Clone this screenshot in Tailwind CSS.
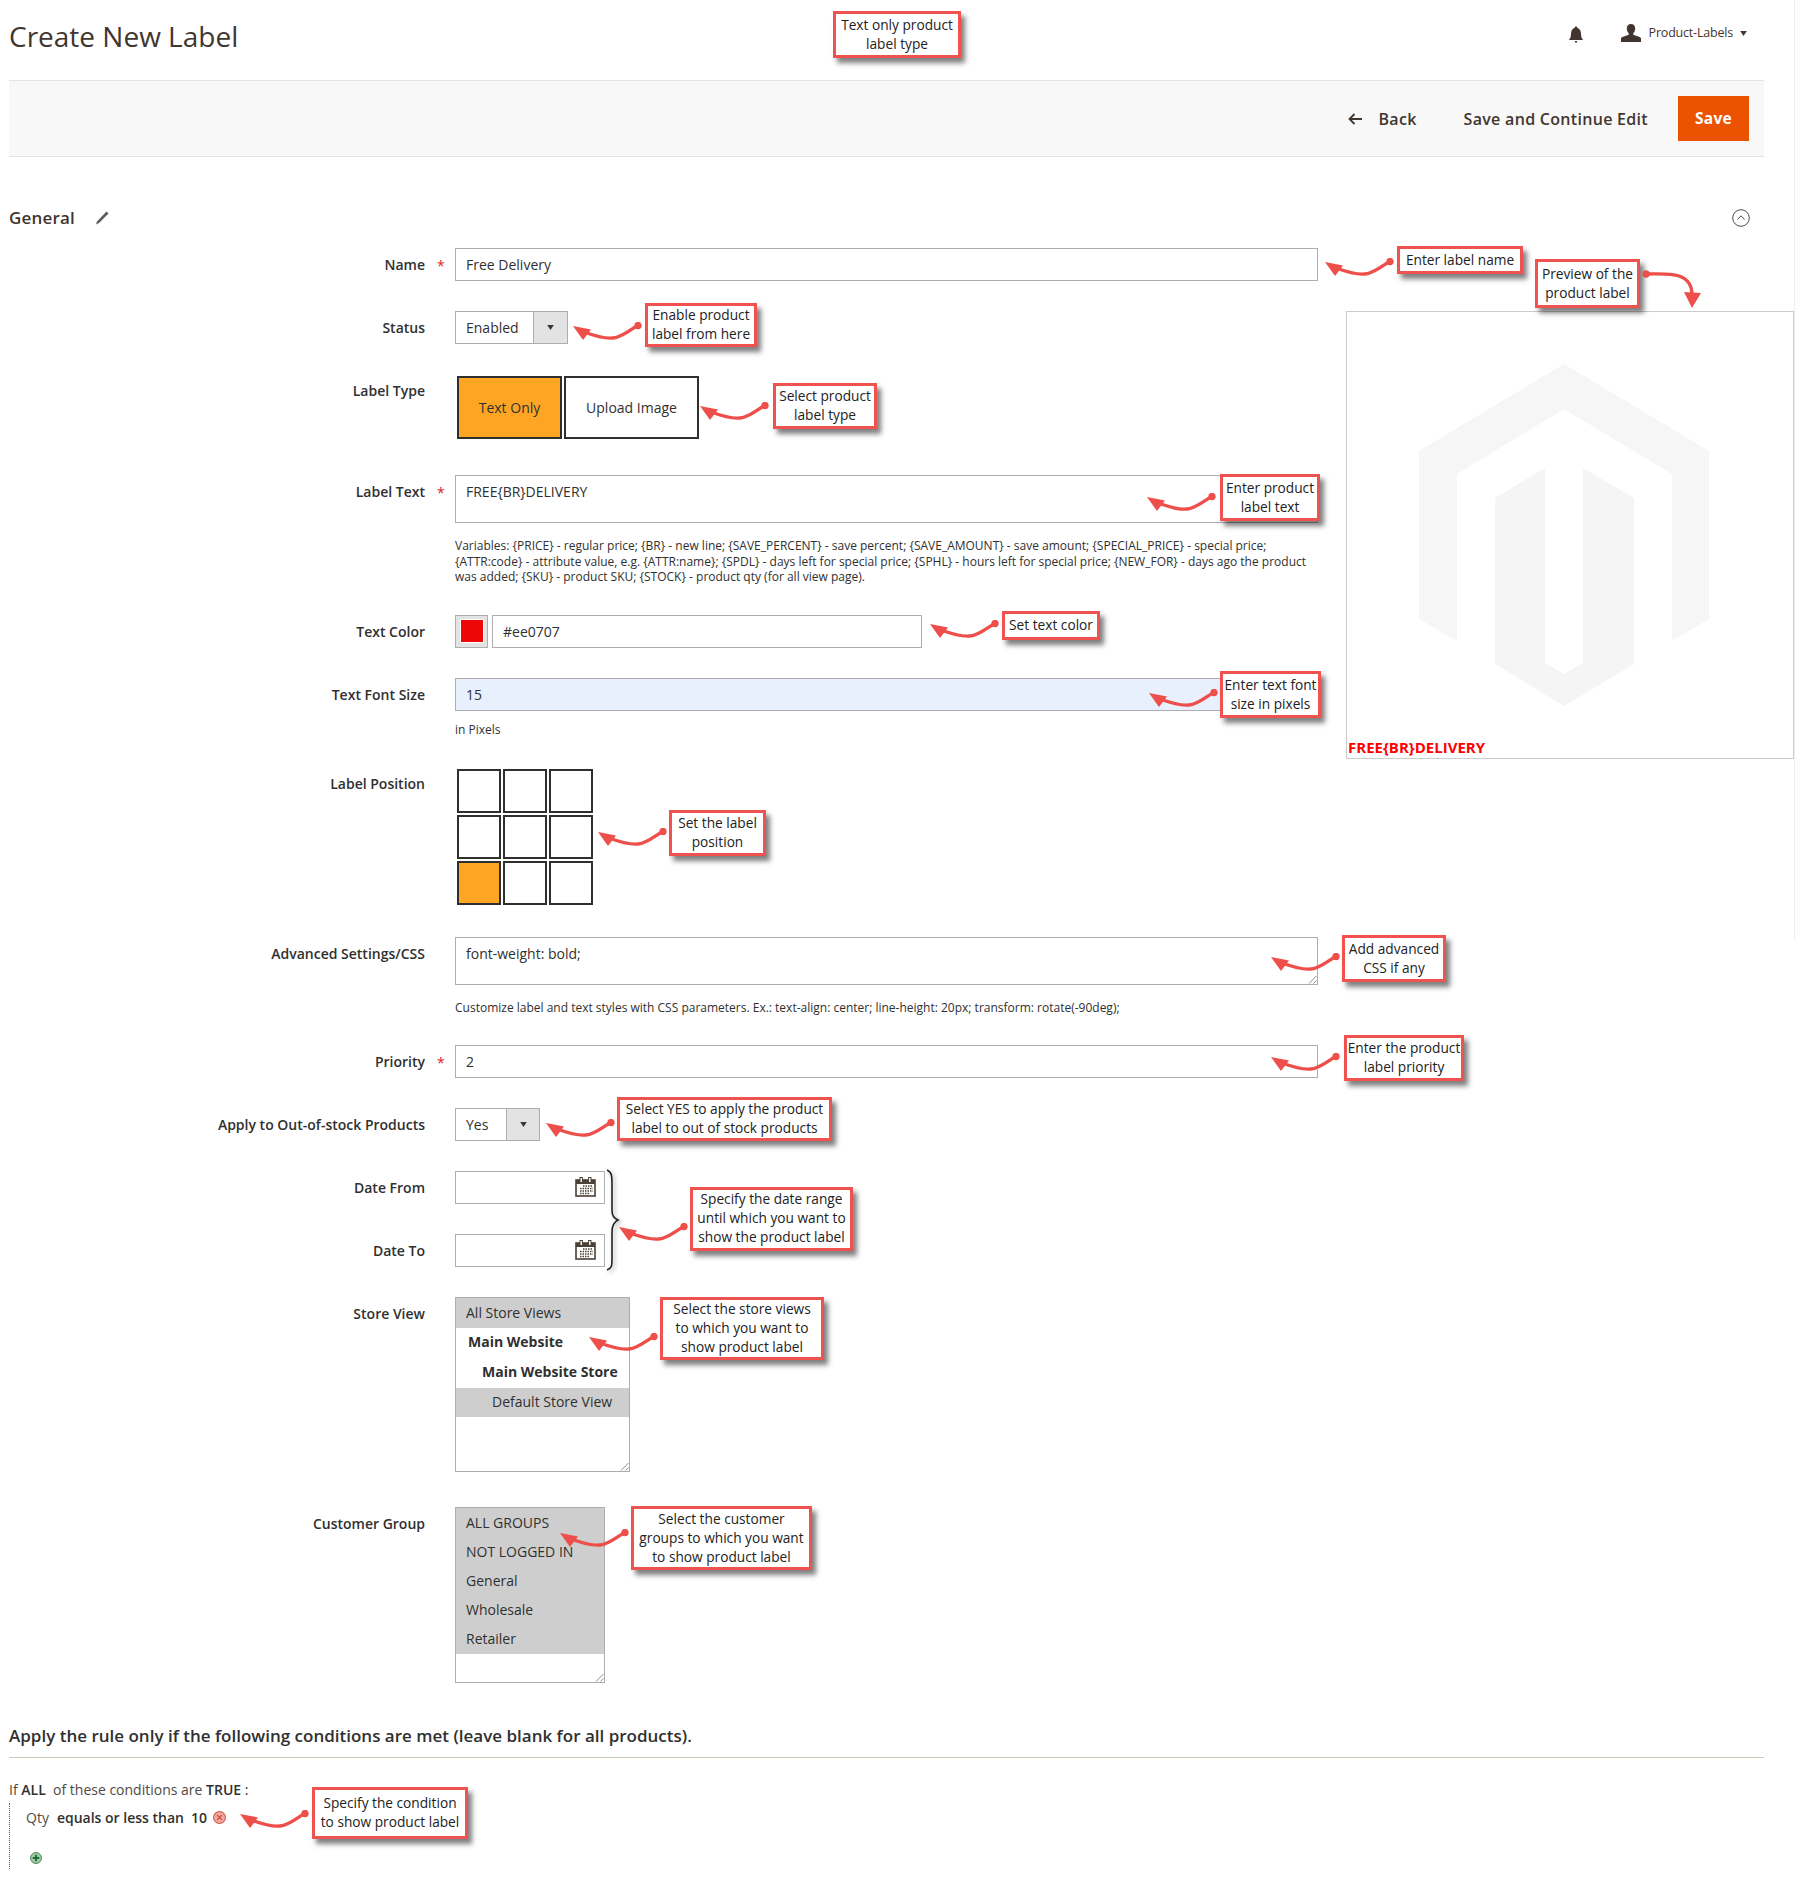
<!DOCTYPE html>
<html lang="en">
<head>
<meta charset="utf-8">
<title>Create New Label</title>
<script src="https://cdn.jsdelivr.net/npm/@tailwindcss/browser@4"></script>
</head>
<body class="bg-white">
<svg class="hidden" width="0" height="0">
  <symbol id="arr" viewBox="0 -2 70 20">
    <polygon points="0,2 18,5.500 10,16" fill="#ee4f4b"/>
    <path d="M11,8 C22,12 32,15 40,14 C50,13 56,6 65,1.500" fill="none" stroke="#ee4f4b" stroke-width="3.400" stroke-linecap="round"/>
    <circle cx="65" cy="1.500" r="3.700" fill="#ee4f4b"/>
  </symbol>
  <symbol id="cal" viewBox="0 0 21 20">
    <rect x="1" y="3" width="19" height="16" fill="#fff" stroke="#4a4035" stroke-width="1.600"/>
    <rect x="1" y="3" width="19" height="4" fill="#4a4035"/>
    <rect x="5" y="0.500" width="2.400" height="5" fill="#fff" stroke="#4a4035" stroke-width="1"/>
    <rect x="13.600" y="0.500" width="2.400" height="5" fill="#fff" stroke="#4a4035" stroke-width="1"/>
    <path d="M8 9h10M5 11.500h13M5 14h13M5 16.500h9" stroke="#4a4035" stroke-width="1.500" stroke-dasharray="1.500 1"/>
  </symbol>
  <symbol id="grip" viewBox="0 0 10 10">
    <path d="M9.500 2 L2 9.500 M9.500 6.500 L6.500 9.500" stroke="#8a8a8a" stroke-width="1"/>
  </symbol>
  <symbol id="tri" viewBox="0 0 8 6">
    <polygon points="0,0 8,0 4,6" fill="#41362f"/>
  </symbol>
</svg>

<div class="relative w-[1795px] h-[1883px] overflow-hidden text-[14px] text-[#303030] [font-family:'Open_Sans',sans-serif]">
  <!-- page chrome -->
  <header class="ml-[9px] w-[1755px] h-[80px] pb-[8px] flex items-center">
    <h1 class="text-[28px] leading-[36px] font-normal text-[#41362f]">Create New Label</h1>
    <div class="ml-auto mr-[17px] flex items-center mb-[2px]">
      <svg class="w-[16px] h-[18px]" viewBox="0 0 16 18"><path d="M8 0.500c1 0 1.400.7 1.400 1.400C12 2.600 13 5 13 8c0 3 .8 4.600 2.200 6H.8C2.200 12.600 3 11 3 8c0-3 1-5.400 3.600-6.100C6.600 1.200 7 .5 8 .5zM6.700 15h2.600L8 17.500z" fill="#41362f"/></svg>
      <svg class="ml-[37px] w-[20px] h-[18px] mb-[4px]" viewBox="0 0 20 18"><path d="M10 0c2.600 0 4.200 1.800 4.200 4.500 0 2-.8 3.600-1.900 4.700v1.500c2.500.8 6.300 2 7.700 3.300V18H0v-4c1.400-1.300 5.200-2.500 7.700-3.300V9.200C6.600 8.100 5.800 6.500 5.800 4.500 5.800 1.800 7.400 0 10 0z" fill="#41362f"/></svg>
      <span class="ml-[8px] text-[12.500px] tracking-[-0.2px] leading-[18px] mb-[4px] text-[#41362f]">Product-Labels</span>
      <svg class="ml-[7px] w-[7px] h-[5px] mb-[3px]"><use href="#tri"/></svg>
    </div>
  </header>

  <div class="ml-[9px] w-[1755px] h-[77px] bg-[#f8f8f8] border-y border-[#e3e3e3] flex items-center justify-end pr-[15px] text-[16px] tracking-[0.3px] font-semibold text-[#41362f]">
    <svg class="w-[14px] h-[12px] mr-[16px]" viewBox="0 0 14 12"><path d="M14 6H2M6.500 1 1.500 6l5 5" fill="none" stroke="#41362f" stroke-width="1.800"/></svg>
    <span>Back</span>
    <span class="ml-[47px]">Save and Continue Edit</span>
    <span class="ml-[30px] w-[71px] h-[45px] bg-[#eb5202] text-white flex items-center justify-center font-bold text-[15.500px]">Save</span>
  </div>

  <div class="ml-[9px] w-[1741px] mt-[51px] h-[20px] flex items-center">
    <h2 class="w-[66px] text-[17px] leading-[20px] font-semibold tracking-[0.2px] text-[#41362f]">General</h2>
    <svg class="ml-[20px] w-[14px] h-[14px]" viewBox="0 0 14 14"><path d="M11.500 0.500l2 2L4 12l-3 1.500L2 10.500z" fill="#5c5c5c"/></svg>
    <svg class="ml-auto w-[18px] h-[18px]" viewBox="0 0 18 18"><circle cx="9" cy="9" r="8.300" fill="none" stroke="#514943" stroke-width="1"/><path d="M5.500 10.500 9 6.800l3.500 3.700" fill="none" stroke="#514943" stroke-width="1"/></svg>
  </div>

  <div class="flex mt-[20px]">
    <!-- form column -->
    <div class="w-[1318px] shrink-0">
      <div class="flex">
        <div class="w-[425px] shrink-0 pt-[7px] text-right font-semibold leading-[20px] relative">Name<span class="absolute left-[437px] top-[8px] text-[#e22626] font-normal">*</span></div>
        <div class="ml-[30px] w-[863px] h-[33px] border border-[#adadad] pl-[10px] leading-[31px]">Free Delivery</div>
      </div>

      <div class="flex mt-[30px]">
        <div class="w-[425px] shrink-0 pt-[7px] text-right font-semibold leading-[20px]">Status</div>
        <div class="ml-[30px] w-[113px] h-[33px] border border-[#adadad] pl-[10px] leading-[31px] flex justify-between">
          <span>Enabled</span>
          <span class="w-[34px] h-full bg-[#e3e3e3] border-l border-[#adadad] flex items-center justify-center"><svg class="w-[7px] h-[5px]"><use href="#tri"/></svg></span>
        </div>
      </div>

      <div class="flex mt-[32px]">
        <div class="w-[425px] shrink-0 pt-[5px] text-right font-semibold leading-[20px]">Label Type</div>
        <div class="ml-[32px] flex gap-[2px] h-[63px]">
          <div class="w-[105px] border-2 border-[#2f2f2f] bg-[#fea623] flex items-center justify-center">Text Only</div>
          <div class="w-[135px] border-2 border-[#2f2f2f] flex items-center justify-center">Upload Image</div>
        </div>
      </div>

      <div class="flex mt-[36px]">
        <div class="w-[425px] shrink-0 pt-[7px] text-right font-semibold leading-[20px] relative">Label Text<span class="absolute left-[437px] top-[8px] text-[#e22626] font-normal">*</span></div>
        <div class="ml-[30px] w-[863px] h-[48px] border border-[#adadad] pl-[10px] pt-[6px] leading-[20px]">FREE{BR}DELIVERY</div>
      </div>
      <p class="ml-[455px] mt-[15px] w-[863px] text-[12px] leading-[15.500px] text-[#303030]">Variables: {PRICE} - regular price; {BR} - new line; {SAVE_PERCENT} - save percent; {SAVE_AMOUNT} - save amount; {SPECIAL_PRICE} - special price; {ATTR:code} - attribute value, e.g. {ATTR:name}; {SPDL} - days left for special price; {SPHL} - hours left for special price; {NEW_FOR} - days ago the product was added; {SKU} - product SKU; {STOCK} - product qty (for all view page).</p>

      <div class="flex mt-[30px]">
        <div class="w-[425px] shrink-0 pt-[7px] text-right font-semibold leading-[20px]">Text Color</div>
        <div class="ml-[30px] w-[33px] h-[33px] bg-[#e3e3e3] border border-[#adadad] flex items-center justify-center"><span class="block w-[24px] h-[24px] bg-[#ee0707] border border-white"></span></div>
        <div class="ml-[4px] w-[430px] h-[33px] border border-[#adadad] pl-[10px] leading-[31px]">#ee0707</div>
      </div>

      <div class="flex mt-[30px]">
        <div class="w-[425px] shrink-0 pt-[7px] text-right font-semibold leading-[20px]">Text Font Size</div>
        <div class="ml-[30px] w-[863px] h-[33px] border border-[#adadad] bg-[#e8f0fe] pl-[10px] leading-[31px]">15</div>
      </div>
      <p class="ml-[455px] mt-[11px] text-[12px] leading-[16px]">in Pixels</p>

      <div class="flex mt-[31px]">
        <div class="w-[425px] shrink-0 pt-[5px] text-right font-semibold leading-[20px]">Label Position</div>
        <div class="ml-[32px] grid grid-cols-[44px_44px_44px] grid-rows-[44px_44px_44px] gap-[2px]">
          <span class="border-2 border-[#2f2f2f]"></span><span class="border-2 border-[#2f2f2f]"></span><span class="border-2 border-[#2f2f2f]"></span>
          <span class="border-2 border-[#2f2f2f]"></span><span class="border-2 border-[#2f2f2f]"></span><span class="border-2 border-[#2f2f2f]"></span>
          <span class="border-2 border-[#2f2f2f] bg-[#fea623]"></span><span class="border-2 border-[#2f2f2f]"></span><span class="border-2 border-[#2f2f2f]"></span>
        </div>
      </div>

      <div class="flex mt-[32px]">
        <div class="w-[425px] shrink-0 pt-[7px] text-right font-semibold leading-[20px]">Advanced Settings/CSS</div>
        <div class="relative ml-[30px] w-[863px] h-[48px] border border-[#adadad] pl-[10px] pt-[6px] leading-[20px]">font-weight: bold;<svg class="absolute right-0 bottom-0 w-[10px] h-[10px]"><use href="#grip"/></svg></div>
      </div>
      <p class="ml-[455px] mt-[15px] text-[12px] leading-[16px]">Customize label and text styles with CSS parameters. Ex.: text-align: center; line-height: 20px; transform: rotate(-90deg);</p>

      <div class="flex mt-[29px]">
        <div class="w-[425px] shrink-0 pt-[7px] text-right font-semibold leading-[20px] relative">Priority<span class="absolute left-[437px] top-[8px] text-[#e22626] font-normal">*</span></div>
        <div class="ml-[30px] w-[863px] h-[33px] border border-[#adadad] pl-[10px] leading-[31px]">2</div>
      </div>

      <div class="flex mt-[30px]">
        <div class="w-[425px] shrink-0 pt-[7px] text-right font-semibold leading-[20px]">Apply to Out-of-stock Products</div>
        <div class="ml-[30px] w-[85px] h-[33px] border border-[#adadad] pl-[10px] leading-[31px] flex justify-between">
          <span>Yes</span>
          <span class="w-[33px] h-full bg-[#e3e3e3] border-l border-[#adadad] flex items-center justify-center"><svg class="w-[7px] h-[5px]"><use href="#tri"/></svg></span>
        </div>
      </div>

      <div class="flex mt-[30px]">
        <div class="w-[425px] shrink-0 pt-[7px] text-right font-semibold leading-[20px]">Date From</div>
        <div class="ml-[30px] w-[150px] h-[33px] border border-[#adadad] flex items-center justify-end pr-[8px]"><svg class="w-[21px] h-[20px]"><use href="#cal"/></svg></div>
      </div>

      <div class="flex mt-[30px]">
        <div class="w-[425px] shrink-0 pt-[7px] text-right font-semibold leading-[20px]">Date To</div>
        <div class="ml-[30px] w-[150px] h-[33px] border border-[#adadad] flex items-center justify-end pr-[8px]"><svg class="w-[21px] h-[20px]"><use href="#cal"/></svg></div>
      </div>

      <div class="flex mt-[30px]">
        <div class="w-[425px] shrink-0 pt-[7px] text-right font-semibold leading-[20px]">Store View</div>
        <div class="relative ml-[30px] w-[175px] h-[175px] border border-[#adadad]">
          <div class="h-[30px] bg-[#cecece] pl-[10px] leading-[30px]">All Store Views</div>
          <div class="h-[30px] pl-[12px] leading-[28px] font-bold">Main Website</div>
          <div class="h-[30px] pl-[26px] leading-[28px] font-bold">Main Website Store</div>
          <div class="h-[29px] bg-[#cecece] pl-[36px] leading-[27px]">Default Store View</div>
          <svg class="absolute right-0 bottom-0 w-[10px] h-[10px]"><use href="#grip"/></svg>
        </div>
      </div>

      <div class="flex mt-[35px]">
        <div class="w-[425px] shrink-0 pt-[7px] text-right font-semibold leading-[20px]">Customer Group</div>
        <div class="relative ml-[30px] w-[150px] h-[176px] border border-[#adadad]">
          <div class="h-[146px] bg-[#cecece] pl-[10px] leading-[29px]">
            <div>ALL GROUPS</div><div>NOT LOGGED IN</div><div>General</div><div>Wholesale</div><div>Retailer</div>
          </div>
          <svg class="absolute right-0 bottom-0 w-[10px] h-[10px]"><use href="#grip"/></svg>
        </div>
      </div>
    </div>

    <!-- preview column -->
    <div class="relative ml-[28px] mt-[63px] w-[448px] h-[448px] border border-[#cccccc] shrink-0">
      <svg class="absolute left-[71px] top-[51px] w-[292px] h-[343px]" viewBox="1417 362 292 343">
        <polygon fill="#f6f6f6" points="1563,363 1418,450 1418,618 1456,640 1456,473 1563,408 1671,473 1671,640 1708,618 1708,450"/>
        <polygon fill="#f5f5f5" points="1494,497 1544,467 1544,662 1563,673 1582,662 1582,467 1633,497 1633,663 1563,705 1494,663"/>
      </svg>
      <span class="absolute left-[1px] bottom-[1px] text-[15px] leading-[20px] font-bold text-[#ff0000]">FREE{BR}DELIVERY</span>
    </div>
  </div>

  <!-- conditions -->
  <div class="ml-[9px] w-[1755px] mt-[42px] pb-[10px] border-b border-[#ccc9b8] text-[17px] leading-[22px] font-semibold">Apply the rule only if the following conditions are met (leave blank for all products).</div>
  <div class="ml-[9px] mt-[23px] leading-[18px]"><span class="text-[#514943]">If</span> <b class="font-semibold">ALL</b>&nbsp; <span class="text-[#514943]">of these conditions are</span> <b class="font-semibold">TRUE</b> :</div>
  <div class="ml-[9px] mt-[4px] h-[66px] border-l border-dotted border-[#555] pl-[16px]">
    <div class="flex items-center leading-[20px] pt-[5px]">
      <span class="text-[#514943]">Qty</span>
      <span class="ml-[8px] font-semibold">equals or less than</span>
      <span class="ml-[7px] font-semibold">10</span>
      <svg class="ml-[6px] w-[13px] h-[13px]" viewBox="0 0 12 12"><circle cx="6" cy="6" r="5.500" fill="#f5a79f" stroke="#cf5a50"/><path d="M3.800 3.800l4.400 4.400M8.200 3.800l-4.400 4.400" stroke="#c9453c" stroke-width="1.100"/></svg>
    </div>
    <svg class="mt-[24px] ml-[4px] w-[12px] h-[12px]" viewBox="0 0 12 12"><circle cx="6" cy="6" r="5.500" fill="#a3c9a3" stroke="#4f8a5f"/><path d="M6 2.800v6.400M2.800 6h6.400" stroke="#1f6a33" stroke-width="1.800"/></svg>
  </div>

  <!-- thin edge on the far right -->
  <div class="absolute left-[1794px] top-0 w-px h-[940px] bg-[#f0f0f0]"></div>

  <!-- annotation: brace -->
  <svg class="absolute left-[604px] top-[1168px] w-[16px] h-[104px] drop-shadow-[2px_2px_2px_rgba(0,0,0,0.35)]" viewBox="0 0 16 104"><path d="M3 2 C8 4 8 8 8 18 L8 42 C8 48 10 50 14 52 C10 54 8 58 8 64 L8 90 C8 98 8 100 3 102" fill="none" stroke="#222" stroke-width="1.600"/></svg>

  <!-- annotation: callouts -->
  <div class="absolute left-[833px] top-[11px] w-[128px] h-[47px] pb-[2px] bg-white border-[3px] border-[#ef5350] shadow-[4px_5px_5px_rgba(0,0,0,0.5)] flex items-center justify-center text-center text-[13.700px] leading-[19px] text-[#222] whitespace-nowrap">Text only product<br>label type</div>
  <div class="absolute left-[1397px] top-[246px] w-[126px] h-[28px] pb-[2px] bg-white border-[3px] border-[#ef5350] shadow-[4px_5px_5px_rgba(0,0,0,0.5)] flex items-center justify-center text-center text-[13.700px] leading-[19px] text-[#222] whitespace-nowrap">Enter label name</div>
  <div class="absolute left-[1535px] top-[259px] w-[105px] h-[49px] pb-[2px] bg-white border-[3px] border-[#ef5350] shadow-[4px_5px_5px_rgba(0,0,0,0.5)] flex items-center justify-center text-center text-[13.700px] leading-[19px] text-[#222] whitespace-nowrap">Preview of the<br>product label</div>
  <div class="absolute left-[645px] top-[303px] w-[112px] h-[44px] pb-[2px] bg-white border-[3px] border-[#ef5350] shadow-[4px_5px_5px_rgba(0,0,0,0.5)] flex items-center justify-center text-center text-[13.700px] leading-[19px] text-[#222] whitespace-nowrap">Enable product<br>label from here</div>
  <div class="absolute left-[773px] top-[383px] w-[104px] h-[46px] pb-[2px] bg-white border-[3px] border-[#ef5350] shadow-[4px_5px_5px_rgba(0,0,0,0.5)] flex items-center justify-center text-center text-[13.700px] leading-[19px] text-[#222] whitespace-nowrap">Select product<br>label type</div>
  <div class="absolute left-[1220px] top-[474px] w-[100px] h-[47px] pb-[2px] bg-white border-[3px] border-[#ef5350] shadow-[4px_5px_5px_rgba(0,0,0,0.5)] flex items-center justify-center text-center text-[13.700px] leading-[19px] text-[#222] whitespace-nowrap">Enter product<br>label text</div>
  <div class="absolute left-[1002px] top-[611px] w-[98px] h-[29px] pb-[2px] bg-white border-[3px] border-[#ef5350] shadow-[4px_5px_5px_rgba(0,0,0,0.5)] flex items-center justify-center text-center text-[13.700px] leading-[19px] text-[#222] whitespace-nowrap">Set text color</div>
  <div class="absolute left-[1220px] top-[671px] w-[101px] h-[47px] pb-[2px] bg-white border-[3px] border-[#ef5350] shadow-[4px_5px_5px_rgba(0,0,0,0.5)] flex items-center justify-center text-center text-[13.700px] leading-[19px] text-[#222] whitespace-nowrap">Enter text font<br>size in pixels</div>
  <div class="absolute left-[669px] top-[810px] w-[97px] h-[46px] pb-[2px] bg-white border-[3px] border-[#ef5350] shadow-[4px_5px_5px_rgba(0,0,0,0.5)] flex items-center justify-center text-center text-[13.700px] leading-[19px] text-[#222] whitespace-nowrap">Set the label<br>position</div>
  <div class="absolute left-[1342px] top-[935px] w-[104px] h-[47px] pb-[2px] bg-white border-[3px] border-[#ef5350] shadow-[4px_5px_5px_rgba(0,0,0,0.5)] flex items-center justify-center text-center text-[13.700px] leading-[19px] text-[#222] whitespace-nowrap">Add advanced<br>CSS if any</div>
  <div class="absolute left-[1344px] top-[1035px] w-[120px] h-[46px] pb-[2px] bg-white border-[3px] border-[#ef5350] shadow-[4px_5px_5px_rgba(0,0,0,0.5)] flex items-center justify-center text-center text-[13.700px] leading-[19px] text-[#222] whitespace-nowrap">Enter the product<br>label priority</div>
  <div class="absolute left-[617px] top-[1097px] w-[215px] h-[44px] pb-[2px] bg-white border-[3px] border-[#ef5350] shadow-[4px_5px_5px_rgba(0,0,0,0.5)] flex items-center justify-center text-center text-[13.700px] leading-[19px] text-[#222] whitespace-nowrap">Select YES to apply the product<br>label to out of stock products</div>
  <div class="absolute left-[690px] top-[1187px] w-[163px] h-[64px] pb-[3px] bg-white border-[3px] border-[#ef5350] shadow-[4px_5px_5px_rgba(0,0,0,0.5)] flex items-center justify-center text-center text-[13.700px] leading-[19px] text-[#222] whitespace-nowrap">Specify the date range<br>until which you want to<br>show the product label</div>
  <div class="absolute left-[660px] top-[1297px] w-[164px] h-[63px] pb-[2px] bg-white border-[3px] border-[#ef5350] shadow-[4px_5px_5px_rgba(0,0,0,0.5)] flex items-center justify-center text-center text-[13.700px] leading-[19px] text-[#222] whitespace-nowrap">Select the store views<br>to which you want to<br>show product label</div>
  <div class="absolute left-[631px] top-[1506px] w-[181px] h-[64px] pb-[2px] bg-white border-[3px] border-[#ef5350] shadow-[4px_5px_5px_rgba(0,0,0,0.5)] flex items-center justify-center text-center text-[13.700px] leading-[19px] text-[#222] whitespace-nowrap">Select the customer<br>groups to which you want<br>to show product label</div>
  <div class="absolute left-[312px] top-[1787px] w-[156px] h-[52px] pb-[2px] bg-white border-[3px] border-[#ef5350] shadow-[4px_5px_5px_rgba(0,0,0,0.5)] flex items-center justify-center text-center text-[13.700px] leading-[19px] text-[#222] whitespace-nowrap">Specify the condition<br>to show product label</div>

  <!-- annotation: arrows -->
  <svg class="absolute left-[1325px] top-[258px] w-[70px] h-[20px]"><use href="#arr"/></svg>
  <svg class="absolute left-[573px] top-[322px] w-[70px] h-[20px]"><use href="#arr"/></svg>
  <svg class="absolute left-[700px] top-[402px] w-[70px] h-[20px]"><use href="#arr"/></svg>
  <svg class="absolute left-[1147px] top-[493px] w-[70px] h-[20px]"><use href="#arr"/></svg>
  <svg class="absolute left-[930px] top-[620px] w-[70px] h-[20px]"><use href="#arr"/></svg>
  <svg class="absolute left-[1149px] top-[689px] w-[70px] h-[20px]"><use href="#arr"/></svg>
  <svg class="absolute left-[598px] top-[828px] w-[70px] h-[20px]"><use href="#arr"/></svg>
  <svg class="absolute left-[1271px] top-[953px] w-[70px] h-[20px]"><use href="#arr"/></svg>
  <svg class="absolute left-[1271px] top-[1053px] w-[70px] h-[20px]"><use href="#arr"/></svg>
  <svg class="absolute left-[546px] top-[1119px] w-[70px] h-[20px]"><use href="#arr"/></svg>
  <svg class="absolute left-[619px] top-[1223px] w-[70px] h-[20px]"><use href="#arr"/></svg>
  <svg class="absolute left-[589px] top-[1333px] w-[70px] h-[20px]"><use href="#arr"/></svg>
  <svg class="absolute left-[560px] top-[1529px] w-[70px] h-[20px]"><use href="#arr"/></svg>
  <svg class="absolute left-[240px] top-[1810px] w-[70px] h-[20px]"><use href="#arr"/></svg>
  <svg class="absolute left-[1642px] top-[268px] w-[62px] h-[42px]" viewBox="1642 268 62 42"><circle cx="1646" cy="274" r="3.700" fill="#ee4f4b"/><path d="M1646 274 C1660 274 1670 273 1679 276 C1688 279 1692 286 1692 295" fill="none" stroke="#ee4f4b" stroke-width="3.400"/><polygon points="1684,292 1701,293 1692,308" fill="#ee4f4b"/></svg>
</div>
</body>
</html>
